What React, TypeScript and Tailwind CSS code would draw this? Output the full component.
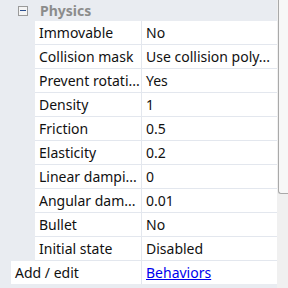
import React from "react";

const rows: [string, string][] = [
  ["Immovable", "No"],
  ["Collision mask", "Use collision poly..."],
  ["Prevent rotati...", "Yes"],
  ["Density", "1"],
  ["Friction", "0.5"],
  ["Elasticity", "0.2"],
  ["Linear dampi...", "0"],
  ["Angular dam...", "0.01"],
  ["Bullet", "No"],
  ["Initial state", "Disabled"],
];

export default function App() {
  return (
    <div
      className="w-[288px] h-[288px] overflow-hidden bg-[#e9ecf1] flex text-[14px] text-[#111]"
      style={{ fontFamily: '"Segoe UI", "Noto Sans", "Open Sans", sans-serif' }}
    >
      <div className="w-[277px] flex flex-col">
        <div className="h-[21px] flex items-center">
          <div className="ml-[18px] w-[10px] h-[10px] border border-[#9a9a9a] bg-[#f4f4f4] flex items-center justify-center">
            <div className="w-[6px] h-[1px] bg-[#2b4f8f]" />
          </div>
          <span className="ml-[12px] font-bold text-[#8c8c8c] leading-none">Physics</span>
        </div>
        {rows.map(([k, v], i) => (
          <div key={i} className="flex h-[24px] pl-[35px]">
            <div className="flex-1 flex bg-white border-b border-[#e3e7ee]">
              <div className="w-[107px] pl-[4px] border-r border-[#e3e7ee] flex items-center whitespace-nowrap overflow-hidden">
                {k}
              </div>
              <div className="flex-1 pl-[4px] flex items-center whitespace-nowrap overflow-hidden">{v}</div>
            </div>
          </div>
        ))}
        <div className="flex h-[23px] pl-[11px]">
          <div className="flex-1 flex bg-white">
            <div className="w-[131px] pl-[4px] border-r border-[#e3e7ee] flex items-center whitespace-nowrap">
              Add / edit
            </div>
            <div className="flex-1 pl-[4px] flex items-center">
              <a className="text-[#0000ee] underline" href="#">Behaviors</a>
            </div>
          </div>
        </div>
      </div>
      <div className="w-[11px] bg-[#f0f0f0] flex flex-col">
        <div className="h-[194px] ml-[1px] border-l border-b border-[#a9a9a9] rounded-bl-[3px] bg-[#f7f7f7]" />
      </div>
    </div>
  );
}
